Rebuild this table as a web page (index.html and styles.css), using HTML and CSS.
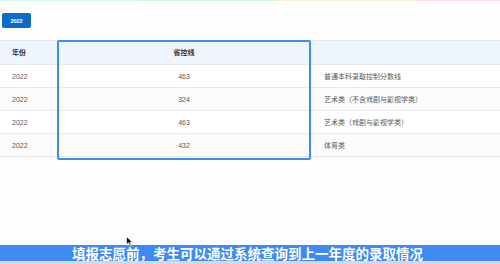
FILE: index.html
```html
<!DOCTYPE html>
<html lang="zh">
<head>
<meta charset="utf-8">
<link rel="stylesheet" href="styles.css">
</head>
<body>
<div class="page">
  <div class="rainbow"><span class="c1"></span><span class="c2"></span><span class="c3"></span><span class="c4"></span></div>
  <div class="toolbar"><span class="btn">2022</span></div>
  <div class="table-wrap">
    <table class="tbl">
      <thead>
        <tr><th class="col-year">年份</th><th class="col-score">省控线</th><th class="col-note"></th></tr>
      </thead>
      <tbody>
        <tr><td class="col-year">2022</td><td class="col-score">463</td><td class="col-note">普通本科录取控制分数线</td></tr>
        <tr><td class="col-year">2022</td><td class="col-score">324</td><td class="col-note">艺术类（不含戏剧与影视学类）</td></tr>
        <tr><td class="col-year">2022</td><td class="col-score">463</td><td class="col-note">艺术类（戏剧与影视学类）</td></tr>
        <tr><td class="col-year">2022</td><td class="col-score">432</td><td class="col-note">体育类</td></tr>
      </tbody>
    </table>
    <div class="highlight"></div>
  </div>
  <div class="spacer"></div>
  <div class="subtitle">填报志愿前，考生可以通过系统查询到上一年度的录取情况</div>
  <div class="foot"></div>
  <svg class="cursor" width="8" height="11" viewBox="0 0 8 11"><path d="M0.5 0.5 L0.5 8.5 L2.5 6.8 L4 10 L5.3 9.4 L3.9 6.3 L6.5 6.3 Z" fill="#111" stroke="#fff" stroke-width="0.7"/></svg>
</div>
</body>
</html>
```
FILE: styles.css
```css
* { box-sizing: border-box; }
html, body { margin: 0; padding: 0; }
body {
  width: 500px; height: 264px; overflow: hidden;
  background: #fdfdfd;
  font-family: "Noto Sans CJK SC", "Liberation Sans", sans-serif;
}
.page { position: relative; width: 500px; height: 264px; display: flex; flex-direction: column; }
.rainbow { display: flex; height: 1px; }
.rainbow span { display: block; height: 1px; }
.c1 { width: 137px; background: #d3f6f8; }
.c2 { width: 141px; background: #d9f5dc; }
.c3 { width: 140px; background: #fbeed3; }
.c4 { flex: 1; background: #fbe1e1; }
.toolbar { padding: 12px 0 0 2px; height: 39px; }
.btn {
  display: flex; align-items: center; justify-content: center;
  width: 29px; height: 15px;
  background: #0b6cc5; border-radius: 2px;
  color: #fff; font-family: "Liberation Sans", sans-serif; font-size: 5.5px; font-weight: bold;
}
.table-wrap { position: relative; }
.tbl { width: 500px; border-collapse: collapse; table-layout: fixed; }
.tbl th, .tbl td {
  height: 23px; padding: 0; font-size: 7px; border-bottom: 1px solid #e8e8ec;
  line-height: 1;
}
.tbl thead th { background: #eef5fd; color: #333; font-weight: bold; border-top: 1px solid #e6e8ee; height: 24px; }
.tbl td { color: #5a5a5a; background: #fff; }
.tbl tbody tr:nth-child(even) td { background: #fbfbfb; }
.col-year { width: 58px; text-align: left; padding-left: 12px !important; }
.col-score { width: 252px; text-align: center; }
.col-note { text-align: left; padding-left: 14px !important; }
td.col-year, td.col-score { font-family: "Liberation Sans", sans-serif; }
.highlight {
  position: absolute; left: 57px; top: 0; width: 254px; height: 120px;
  border: 2px solid #3d8cf6; border-radius: 2px;
}
.spacer { flex: 1; }
.subtitle {
  height: 16px; background: #3d8af2; color: #fff;
  font-size: 13.5px; font-weight: bold; line-height: 16px;
  text-align: center; padding-right: 5px; white-space: nowrap;
}
.foot { height: 3px; background: #d8d8d8; }
.cursor { position: absolute; left: 126px; top: 236px; }
```
